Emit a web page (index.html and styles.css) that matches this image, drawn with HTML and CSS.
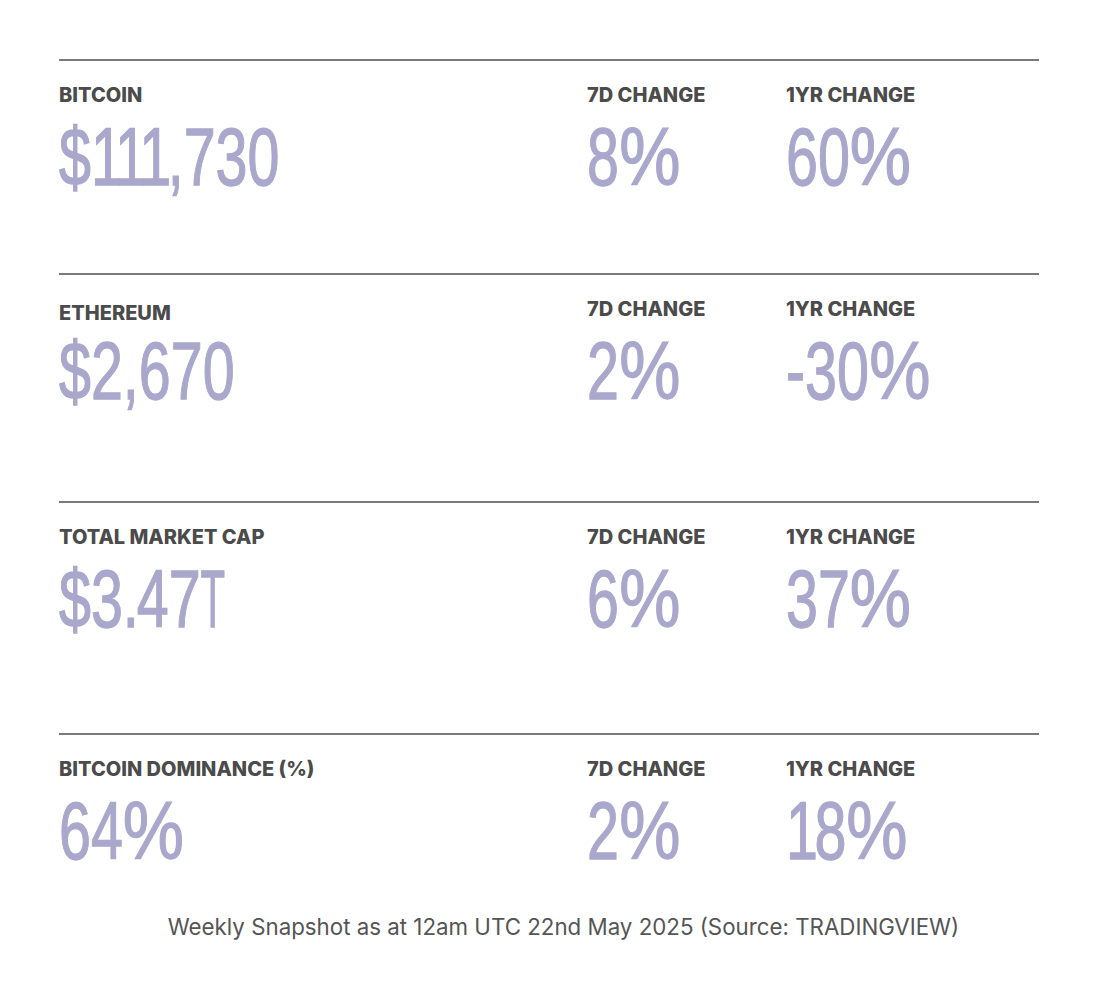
FILE: index.html
```html
<!DOCTYPE html>
<html lang="en">
<head>
<meta charset="utf-8">
<title>Weekly Snapshot</title>
<link rel="stylesheet" href="styles.css">
</head>
<body>
<main class="wrap">
  <section class="row row-1">
    <div class="cell"><div class="label">BITCOIN</div><div class="value"><span class="num">$<span class="one">111</span>,730</span></div></div>
    <div class="cell"><div class="label">7D CHANGE</div><div class="value"><span class="num">8<span class="pct">%</span></span></div></div>
    <div class="cell"><div class="label">1YR CHANGE</div><div class="value"><span class="num">60<span class="pct">%</span></span></div></div>
  </section>
  <section class="row row-2">
    <div class="cell"><div class="label label-low">ETHEREUM</div><div class="value"><span class="num">$2,670</span></div></div>
    <div class="cell"><div class="label">7D CHANGE</div><div class="value"><span class="num">2<span class="pct">%</span></span></div></div>
    <div class="cell"><div class="label">1YR CHANGE</div><div class="value"><span class="num">-30<span class="pct">%</span></span></div></div>
  </section>
  <section class="row row-3">
    <div class="cell"><div class="label">TOTAL MARKET CAP</div><div class="value"><span class="num">$3<span class="dot">.</span>47<span class="tee">T</span></span></div></div>
    <div class="cell"><div class="label">7D CHANGE</div><div class="value"><span class="num">6<span class="pct">%</span></span></div></div>
    <div class="cell"><div class="label">1YR CHANGE</div><div class="value"><span class="num">37<span class="pct">%</span></span></div></div>
  </section>
  <section class="row row-4">
    <div class="cell"><div class="label">BITCOIN DOMINANCE (%)</div><div class="value"><span class="num">64<span class="pct">%</span></span></div></div>
    <div class="cell"><div class="label">7D CHANGE</div><div class="value"><span class="num">2<span class="pct">%</span></span></div></div>
    <div class="cell"><div class="label">1YR CHANGE</div><div class="value"><span class="num"><span class="one">1</span>8<span class="pct">%</span></span></div></div>
  </section>
  <p class="note">Weekly Snapshot as at 12am UTC 22nd May 2025 (Source: TRADINGVIEW)</p>
</main>
</body>
</html>
```

FILE: styles.css
```css
html, body {
  margin: 0;
  padding: 0;
  background: #ffffff;
}

.wrap {
  width: 980px;
  margin: 0 0 0 59px;
  padding-top: 59px;
}

.row {
  display: grid;
  grid-template-columns: 528px 199px 1fr;
  border-top: 2px solid #7a7a7a;
  box-sizing: border-box;
  padding-top: 22px;
}

.row-1 { height: 214px; }
.row-2 { height: 228px; }
.row-3 { height: 232px; }
.row-4 { height: 180px; }

.label {
  font-family: "Inter", "Liberation Sans", sans-serif;
  font-weight: 800;
  font-size: 20px;
  line-height: 24px;
  letter-spacing: 0;
  color: #4b4b4b;
  white-space: nowrap;
}

.label-low {
  margin-top: 4px;
  margin-bottom: -4px;
}

.value {
  margin-top: 9px;
  height: 82px;
  font-family: "Liberation Sans", sans-serif;
  font-weight: 400;
  font-size: 82px;
  line-height: 82px;
  color: #a9a8cc;
  -webkit-text-stroke: 1.3px #a9a8cc;
  white-space: nowrap;
}

.num {
  display: inline-block;
  transform: scaleX(0.7);
  transform-origin: left center;
}

.one {
  letter-spacing: -5px;
}

.dot {
  letter-spacing: -3px;
}

.tee {
  display: inline-block;
  transform: scaleX(0.7);
  transform-origin: left center;
}

.pct {
  display: inline-block;
  transform: scaleX(1.2);
  transform-origin: left center;
}

.note {
  margin: 0;
  margin-left: -59px;
  padding-left: 11px;
  width: 1116px;
  box-sizing: border-box;
  text-align: center;
  font-family: "Inter", "Liberation Sans", sans-serif;
  font-size: 22.3px;
  line-height: 28px;
  color: #555555;
}
```
